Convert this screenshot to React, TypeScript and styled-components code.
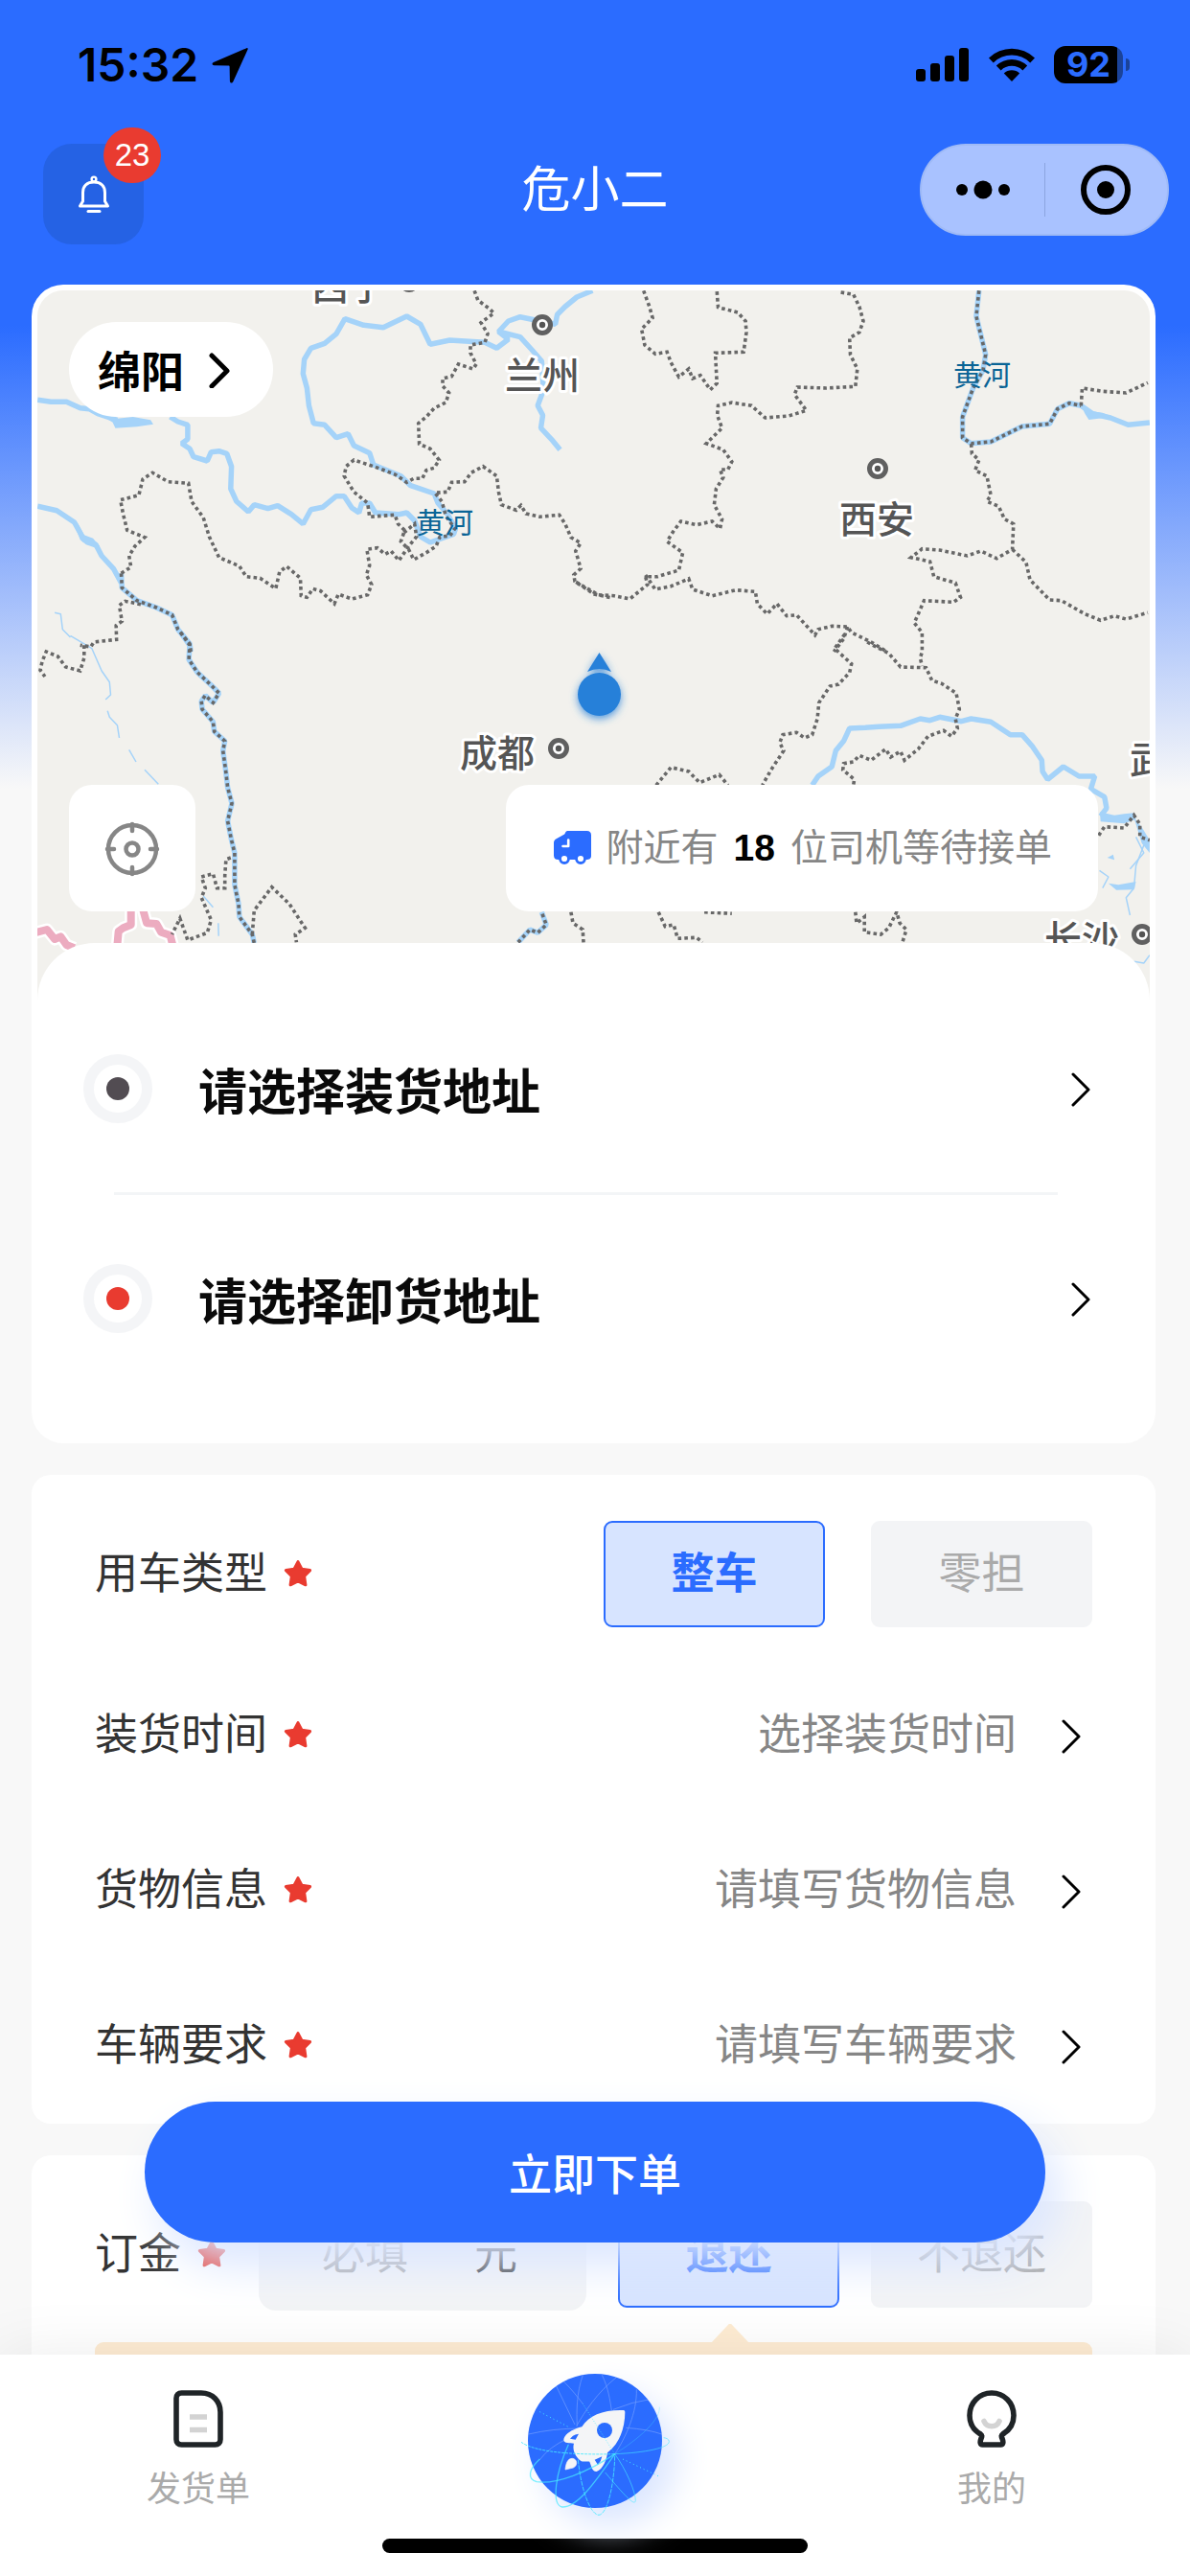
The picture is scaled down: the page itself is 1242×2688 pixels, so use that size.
import React from "react";
import styled, { createGlobalStyle, css } from "styled-components";

const BLUE = "#2b6cff";
const RED = "#e93b30";

const GlobalStyle = createGlobalStyle`
  *, *::before, *::after { box-sizing: border-box; }
  html, body { margin: 0; padding: 0; background: #f8f8f8; }
  body, button, input {
    font-family: "Liberation Sans", "Noto Sans CJK SC", sans-serif;
  }
  button { margin: 0; padding: 0; border: 0; background: none; color: inherit; cursor: pointer; }
  svg { display: block; flex: none; }
`;

/* ---------- page frame ---------- */

const Screen = styled.div`
  display: flex;
  flex-direction: column;
  height: 100vh;
  overflow: hidden;
  background: linear-gradient(${BLUE} 0, ${BLUE} 340px, #f8f8f8 823px);
`;

const StatusBar = styled.div`
  display: flex;
  align-items: center;
  justify-content: space-between;
  flex: none;
  height: 135px;
  padding: 0 63px 0 81px;
`;

const StatusGroup = styled.div<{ $gap: number }>`
  display: flex;
  align-items: center;
  gap: ${(p) => p.$gap}px;
`;

const Clock = styled.time`
  font: 600 48px/60px Inter, sans-serif;
`;

const Battery = styled.div`
  display: flex;
  align-items: center;
  gap: 3px;
`;

const BatteryBody = styled.div`
  width: 72px;
  height: 39px;
  border-radius: 12px;
  background: linear-gradient(90deg, #000 92%, #1b4399 92%);
  color: ${BLUE};
  font: 700 36px/39px Inter, sans-serif;
  text-align: center;
`;

const BatteryTip = styled.div`
  width: 4px;
  height: 13px;
  border-radius: 0 4px 4px 0;
  background: #1b4399;
`;

const NavBar = styled.header`
  display: grid;
  grid-template-columns: 1fr auto 1fr;
  flex: none;
  height: 162px;
  padding: 15px 22px 0;
`;

const BellButton = styled.button`
  position: relative;
  display: flex;
  align-items: center;
  justify-content: center;
  width: 105px;
  height: 105px;
  margin-left: 23px;
  border-radius: 30px;
  background: #2562e4;
`;

const Badge = styled.span`
  position: absolute;
  top: -17px;
  right: -18px;
  width: 60px;
  height: 58px;
  border-radius: 30px;
  background: ${RED};
  color: #fff;
  font-size: 33px;
  line-height: 58px;
  text-align: center;
`;

const Title = styled.h1`
  margin: 0;
  color: #fff;
  font-size: 51px;
  font-weight: 400;
  line-height: 98px;
`;

const Capsule = styled.div`
  display: flex;
  justify-self: end;
  align-items: center;
  width: 260px;
  height: 96px;
  border: 2px solid #9fbaf6;
  border-radius: 48px;
  background: #a9c2ff;
`;

const CapsuleButton = styled.button`
  display: flex;
  flex: 1;
  align-items: center;
  justify-content: center;
  height: 56px;
  & + & { border-left: 1px solid #8ba5e0; }
`;

const Body = styled.main`
  display: flex;
  flex: 1;
  flex-direction: column;
  gap: 33px;
  min-height: 0;
  padding: 0 36px 0 33px;
  overflow: hidden;
`;

/* ---------- map card ---------- */

const MapCard = styled.section`
  flex: none;
  padding: 6px;
  border-radius: 33px;
  background: #fff;
`;

const MapArea = styled.div`
  position: relative;
  height: 743px;
  overflow: hidden;
  border-radius: 27px 27px 0 0;
  background: #f2f1ed;
`;

const MapCanvas = styled.svg`
  position: absolute;
  inset: 0;
  width: 100%;
  height: 100%;
`;

const MapOverlay = styled.div`
  position: absolute;
  inset: 0;
  display: flex;
  flex-direction: column;
  align-items: flex-start;
  justify-content: space-between;
  padding: 33px 54px 95px 33px;
`;

const CityButton = styled.button`
  display: flex;
  align-items: center;
  gap: 25px;
  height: 99px;
  padding: 0 44px 0 30px;
  border-radius: 50px;
  background: #fff;
  font-size: 45px;
  font-weight: 700;
`;

const MapFooter = styled.div`
  display: flex;
  justify-content: space-between;
  align-self: stretch;
`;

const LocateButton = styled.button`
  display: flex;
  align-items: center;
  justify-content: center;
  width: 132px;
  height: 132px;
  border-radius: 24px;
  background: #fff;
`;

const NearbyDrivers = styled.p`
  display: flex;
  align-items: center;
  gap: 16px;
  height: 132px;
  margin: 0;
  padding: 0 48px 0 50px;
  border-radius: 24px;
  background: #fff;
  color: #868686;
  font-size: 39px;
  line-height: 60px;
`;

const DriverCount = styled.strong`
  color: #000;
`;

const AddressSheet = styled.div`
  position: relative;
  margin-top: -62px;
  padding: 44px 60px 37px 48px;
  border-radius: 60px 60px 27px 27px;
  background: #fff;
`;

const AddressRow = styled.button`
  display: flex;
  align-items: center;
  gap: 48px;
  width: 100%;
  height: 216px;
  font-size: 51px;
  font-weight: 700;
  text-align: left;
  color: #0a0a0a;
  & > span:nth-child(2) { flex: 1; }
`;

const Divider = styled.hr`
  height: 3px;
  margin: 0 36px 0 32px;
  border: 0;
  background: #f3f5f7;
`;

const Dot = styled.span<{ $color: string }>`
  display: flex;
  align-items: center;
  justify-content: center;
  width: 72px;
  height: 72px;
  border: 11px solid #f4f5f7;
  border-radius: 50%;
  background: #fff;
  &::after {
    content: "";
    width: 24px;
    height: 24px;
    border-radius: 50%;
    background: ${(p) => p.$color};
  }
`;

/* ---------- order form ---------- */

const FormCard = styled.section`
  flex: none;
  padding: 0 66px;
  border-radius: 20px;
  background: #fff;
`;

const rowBase = css`
  display: flex;
  align-items: center;
  width: 100%;
  font-size: 45px;
  line-height: 66px;
  color: #333;
`;

const FieldRow = styled.div<{ $top: number; $bottom: number }>`
  ${rowBase}
  margin: 0;
  padding: ${(p) => p.$top}px 0 ${(p) => p.$bottom}px;
`;

const PickerRow = styled.button`
  ${rowBase}
  height: 162px;
  padding-right: 10px;
  text-align: left;
`;

const FieldName = styled.span`
  display: flex;
  align-items: center;
  gap: 17px;
  margin-right: auto;
`;

const PickerValue = styled.span`
  margin-right: 45px;
  color: #868686;
`;

const Segments = styled.div<{ $gap: number }>`
  display: flex;
  gap: ${(p) => p.$gap}px;
`;

const SegmentInput = styled.input`
  position: absolute;
  inset: 0;
  margin: 0;
  opacity: 0;
`;

const Segment = styled.label`
  position: relative;
  display: flex;
  align-items: center;
  justify-content: center;
  width: 231px;
  height: 111px;
  border: 2px solid #f3f4f6;
  border-radius: 9px;
  background: #f3f4f6;
  color: #aaa;
  &:has(input:checked) {
    border-color: ${BLUE};
    background: #d7e4ff;
    color: ${BLUE};
    font-weight: 700;
  }
`;

const DepositBox = styled.label`
  display: flex;
  align-items: center;
  width: 342px;
  height: 117px;
  margin-right: 33px;
  padding-left: 66px;
  border-radius: 18px;
  background: #f3f4f6;
`;

const DepositInput = styled.input`
  width: 159px;
  padding: 0;
  border: 0;
  outline: 0;
  background: none;
  font-size: 45px;
  line-height: 66px;
  &::placeholder { color: #aaa; opacity: 1; }
`;

const Notice = styled.div`
  position: relative;
  height: 96px;
  border-radius: 9px;
  background: #feecd3;
  &::before {
    content: "";
    position: absolute;
    top: -19px;
    right: 358px;
    width: 40px;
    height: 20px;
    background: inherit;
    clip-path: polygon(47% 0, 53% 0, 100% 100%, 0 100%);
  }
`;

/* ---------- bottom ---------- */

const Dock = styled.footer`
  position: relative;
  flex: none;
  height: 231px;
  background: #fff;
  box-shadow: 0 0 60px rgba(0, 0, 0, 0.08);
`;

const SubmitButton = styled.button`
  position: absolute;
  right: 151px;
  bottom: calc(100% + 117px);
  left: 151px;
  height: 147px;
  border-radius: 74px;
  background: ${BLUE};
  box-shadow: 15px 24px 48px #dbe6ff;
  color: #fff;
  font-size: 45px;
  font-weight: 500;
`;

const Tabs = styled.nav`
  display: grid;
  grid-template-columns: repeat(3, 1fr);
  height: 192px;
`;

const Tab = styled.a`
  display: flex;
  flex-direction: column;
  align-items: center;
  gap: 17px;
  padding-top: 37px;
  color: #aaa;
  font-size: 36px;
  line-height: 54px;
  text-decoration: none;
`;

const RocketTab = styled.a`
  justify-self: center;
  align-self: start;
  width: 140px;
  height: 140px;
  margin-top: 20px;
  border-radius: 50%;
  background: ${BLUE};
  box-shadow: 15px 18px 36px #dbe6ff;
`;

const HomeIndicator = styled.div`
  width: 444px;
  height: 15px;
  margin: 0 auto;
  border-radius: 8px;
  background: #000;
`;

/* ---------- icons ---------- */

const Chevron = ({ weight = 4, color = "#000" }: { weight?: number; color?: string }) => (
  <svg width="24" height="38" viewBox="0 0 24 38" fill="none" stroke={color} strokeWidth={weight} strokeLinecap="round" strokeLinejoin="round" aria-hidden>
    <path d="M4 4 L20 20 L4 36" />
  </svg>
);

const Star = () => (
  <svg width="30" height="30" viewBox="0 0 30 30" fill={RED} stroke={RED} strokeWidth="3" strokeLinejoin="round" aria-hidden>
    <path d="M15 1.600 L19 9.200 L27.600 10.600 L21.600 16.800 L22.900 25.800 L15 22 L7.100 25.800 L8.400 16.800 L2.400 10.600 L11 9.200 Z" />
  </svg>
);

const LocationArrow = () => (
  <svg width="38" height="38" viewBox="0 0 38 38" aria-hidden>
    <path d="M36.4 1.2 C37.6 .8 38 1.6 37.5 2.8 L22.3 36.2 C21.3 38.3 19 38 18.9 35.6 L18.6 20.6 C18.6 19.8 18.3 19.4 17.4 19.4 L2.6 19.2 C.2 19.1 -.2 17 1.9 16 Z" />
  </svg>
);

const Signal = () => (
  <svg width="56" height="36" viewBox="0 0 56 36" aria-hidden>
    <rect x="0" y="22" width="10" height="13" rx="3" />
    <rect x="15" y="16" width="10" height="19" rx="3" />
    <rect x="30" y="8" width="10" height="27" rx="3" />
    <rect x="45" y="0" width="10" height="35" rx="3" />
  </svg>
);

const Wifi = () => (
  <svg width="50" height="36" viewBox="0 0 50 36" aria-hidden>
    <path d="M1 10.5 A34.5 34.5 0 0 1 49 10.5 L44.2 15.4 A27.5 27.5 0 0 0 5.8 15.4 Z" />
    <path d="M8.8 18.6 A23.5 23.5 0 0 1 41.2 18.6 L36.4 23.4 A16.5 16.5 0 0 0 13.6 23.4 Z" />
    <path d="M16.8 26.6 A12 12 0 0 1 33.2 26.6 L25 35 Z" />
  </svg>
);

const Bell = () => (
  <svg width="34" height="40" viewBox="0 0 34 40" fill="none" stroke="#fff" strokeWidth="3" strokeLinecap="round" strokeLinejoin="round" aria-hidden>
    <circle cx="17" cy="4" r="2.4" strokeWidth="2.4" />
    <path d="M5.5 27 V18 C5.500 11 10 7 17 7 S28.500 11 28.500 18 V27 L31.500 32 H2.500 Z" />
    <path d="M11 37.500 H23" />
  </svg>
);

const Crosshair = () => (
  <svg width="60" height="60" viewBox="0 0 60 60" fill="none" stroke="#868686" strokeWidth="4.500" strokeLinecap="round" aria-hidden>
    <circle cx="30" cy="31" r="25" />
    <circle cx="30" cy="31" r="6.500" />
    <path d="M30 5 V12 M30 50 V57 M4 31 H11 M49 31 H56" />
  </svg>
);

const Truck = () => (
  <svg width="39" height="36" viewBox="0 0 39 36" aria-hidden>
    <path fill={BLUE} d="M15 0 H34.500 C37.500 0 39 1.500 39 4.500 V26 C39 29 37 30 34 30 H4.500 C1.500 30 0 28.500 0 25.500 V12.500 C0 10.500 .7 9.500 2.200 8.500 L8.500 5 C10.500 4 11.500 3.500 12 2 C12.500 .5 13.500 0 15 0 Z" />
    <path fill="none" stroke="#fff" strokeWidth="2.600" strokeLinecap="round" strokeLinejoin="round" d="M15.200 9.500 V16 H9.500" />
    <circle cx="11" cy="29" r="4.500" fill="#fff" stroke={BLUE} strokeWidth="2.800" />
    <circle cx="28" cy="29" r="4.500" fill="#fff" stroke={BLUE} strokeWidth="2.800" />
  </svg>
);

const OrdersIcon = () => (
  <svg width="52" height="60" viewBox="0 0 52 60" fill="none" aria-hidden>
    <path d="M8.500 3 H29 C41 3 49 11.500 49 23 V51.500 C49 55 47 57 43.500 57 H8.500 C5 57 3 55 3 51.500 V8.500 C3 5 5 3 8.500 3 Z" stroke="#1f2427" strokeWidth="5.600" />
    <path d="M17 28 H35 M17 41.500 H35" stroke="#d3d3d3" strokeWidth="5.600" />
  </svg>
);

const MineIcon = () => (
  <svg width="52" height="60" viewBox="0 0 52 60" fill="none" strokeLinecap="round" strokeLinejoin="round" aria-hidden>
    <path d="M14.500 46 C7.500 42 3 35 3 26.500 C3 13 13 3 26 3 S49 13 49 26.500 C49 35 44.500 42 37.500 46 C36 47 36.300 49 37 50.500 C38.500 54.500 38 57 35.500 57 H16.500 C14 57 13.500 54.500 15 50.500 C15.700 49 16 47 14.500 46 Z" stroke="#1f2427" strokeWidth="5.600" />
    <path d="M18 32.500 C21 39.500 31 39.500 34 32.500" stroke="#d3d3d3" strokeWidth="5.600" />
  </svg>
);

const Rocket = () => (
  <svg width="140" height="140" viewBox="213 171 420 420" overflow="visible" fill="none" aria-hidden>
    <g stroke="#fff" strokeWidth="2.500" opacity=".28">
      <path d="M385 175 C365 230 365 290 367 335 M445 175 C465 215 470 255 475 285 M490 182 C430 230 390 290 365 335" />
      <path d="M302 210 L360 330 M325 195 C350 220 370 245 385 265 M553 220 C555 290 520 370 485 422" />
      <path d="M480 283 Q540 258 600 250 M215 360 Q290 342 380 342 M520 340 Q590 345 632 360" />
      <path d="M335 375 Q280 400 250 440" />
    </g>
    <path d="M512 285 C450 283 405 300 382 337 C350 345 325 362 325 378 C325 389 345 388 357 389 C352 405 358 428 378 443 C385 448 400 444 406 446 C412 460 414 478 428 477 C448 470 460 440 462 418 C500 390 517 340 517 290 Q517 285 512 285 Z" fill="#f4f5f7" />
    <path d="M330 471 C332 450 338 436 352 436 C368 438 370 458 355 465 Z" fill="#f4f5f7" stroke="#f4f5f7" strokeWidth="2" />
    <g fill={BLUE}>
      <circle cx="453" cy="348" r="24" />
      <path d="M345 374 Q355 360 372 359 L362 377 Z M422 440 L445 430 Q442 446 432 456 Z" />
    </g>
    <g stroke="#46e9ff" strokeWidth="3">
      <path d="M192 385 C240 420 380 425 485 422" strokeDasharray="9 3" opacity=".85" />
      <path d="M485 422 C580 418 655 403 655 383 C655 375 645 372 638 371" opacity=".6" />
      <path d="M250 438 C215 470 210 500 240 509 C300 518 400 480 485 422" strokeWidth="4" opacity=".7" />
      <path d="M485 422 C560 375 628 315 625 275" opacity=".3" />
      <path d="M340 392 C300 480 285 580 320 588 C370 590 430 500 485 422" strokeWidth="4" opacity=".7" />
      <path d="M370 440 C380 540 410 612 435 613 C465 610 485 500 485 422" strokeDasharray="14 3" opacity=".85" />
      <path d="M485 422 C520 470 550 540 550 568 C548 583 530 570 455 480" opacity=".6" />
      <path d="M485 422 L385 265" strokeDasharray="3 5" opacity=".7" />
      <path d="M250 290 L345 340 M510 438 L625 493" strokeDasharray="3 9" />
    </g>
  </svg>
);

/* ---------- map drawing ---------- */

type Tile = { x: number; y: number; sx: number; sy: number };

const NW: Tile = { x: 0, y: 280, sx: 2.45, sy: 3 };
const NE: Tile = { x: 600, y: 280, sx: 2.442, sy: 3 };
const SW: Tile = { x: 0, y: 660, sx: 2.45, sy: 3 };
const SE: Tile = { x: 600, y: 660, sx: 2.442, sy: 3 };

const project = ([tile, pts]: [Tile, string]) =>
  pts
    .split(" ")
    .map((p) => p.split(",").map(Number))
    .map(([x, y]) => `${(tile.x + x / tile.sx).toFixed(1)},${(tile.y + y / tile.sy).toFixed(1)}`)
    .join(" ");

const RIVERS: [Tile, string][] = [
  [NW, "96,412 130,418 170,418 205,437 228,440 250,455 300,475"],
  [NW, "435,465 455,480 480,490 480,535 465,548 485,565 495,590 530,603 540,575 560,572 580,580 592,620 590,690 605,730 635,762 650,740 685,752 710,743 745,770 775,800 795,755 825,748 860,713 880,713 900,750 918,765 925,735 945,735 960,765 1020,770 1040,765 1060,790 1075,840 1100,858 1160,832 1165,815 1145,770 1120,735 1110,705 1050,680 1025,650 955,615 945,578 905,555 890,518 860,530 830,490 802,485 790,430 785,375 775,330 778,285 795,250 830,235 860,205 882,158 930,178 980,185 1040,150 1075,175 1100,238 1150,225 1240,232 1270,250 1300,222 1275,198 1300,165 1330,152 1420,175 1425,145 1445,120 1475,90 1515,70"],
  [NW, "1275,198 1330,215 1360,255 1385,290 1390,380 1375,430 1388,460 1383,500 1410,535 1432,568"],
  [NW, "96,745 145,758 190,795 215,850 245,865 260,900 290,940 310,985"],
  [NE, "1290,430 1320,455 1365,468 1410,490 1465,483"],
  [SE, "605,478 620,450 655,420 665,370 685,340 700,300 740,298 775,295 830,292 880,270 905,275 930,265 985,278 1010,270 1060,280 1110,320 1140,320 1165,355 1190,400 1192,435 1205,460 1245,420 1285,450 1325,450 1315,490 1350,515 1355,550 1340,575"],
];

const LAKES: [Tile, string][] = [
  [NW, "262,462 300,470 340,465 385,475 392,488 350,496 295,500 288,482"],
  [NW, "185,785 200,800 215,835 238,845 255,870 245,875 220,865 205,850"],
  [NE, "1290,430 1318,448 1345,452 1370,465 1335,470 1310,474 1300,455"],
  [SE, "1338,562 1375,572 1400,568 1425,565 1430,585 1400,598 1340,592"],
  [SE, "1360,785 1385,790 1430,780 1425,805 1380,806"],
  [SE, "1357,705 1372,695 1375,712"],
  [SE, "1425,580 1445,610 1465,650 1465,690 1445,660"],
];

const THIN_RIVERS: [Tile, string][] = [
  [NW, "140,1078 155,1082 160,1130 180,1155"],
  [SW, "180,10 235,50 260,120 280,155 283,195 270,210"],
  [SW, "275,245 280,265 300,290 305,330"],
  [SW, "330,367 348,405"],
  [SW, "370,430 405,475"],
  [SW, "520,825 545,860"],
  [SW, "558,910 559,950"],
  [SE, "1430,640 1450,690 1415,740"],
  [SE, "1455,650 1430,730 1425,800 1405,830 1415,885"],
  [SE, "1337,745 1360,765 1345,800"],
  [SE, "1425,1030 1450,1035 1465,1010"],
];

const FOLLOWED: [Tile, string][] = [
  [NW, "310,955 312,1000 350,1040 400,1062 440,1085 455,1130 485,1175 488,1200"],
  [SW, "462,0 485,40 483,85 505,125 540,165 560,190 545,220 525,197 515,215 517,240 545,280 548,310 575,340 570,370 577,430 582,485 593,535 582,590 592,650 600,690 600,790 610,850 612,890 645,945 650,972"],
  [NE, "1030,70 1023,150 1047,270 1040,320 1015,375 988,465 988,530 1010,548 1060,543 1140,495 1210,487 1230,440 1260,422 1290,430"],
  [SW, "1325,970 1355,930 1375,940 1397,915 1385,875"],
];

const BORDERS: [Tile, string][] = [
  ...FOLLOWED,
  [NW, "1213,70 1222,100 1250,125 1263,140 1230,170 1247,205 1240,232 1203,240 1203,265 1218,300 1210,315 1172,300 1155,338 1132,345 1132,368 1148,390 1140,420 1110,438 1090,465 1070,485 1072,550 1100,565 1123,600 1110,625 1090,632 1080,658 1058,658 1040,670 1010,645 960,622 905,600 885,620 880,650 905,700 940,735 945,778 975,775 1010,772 1018,800 1035,820 1025,855 1045,880 1058,912 1090,890 1115,870 1125,840 1150,838 1163,815 1140,775 1130,730 1112,703 1145,700 1155,670 1188,668 1205,640 1235,620 1270,650 1275,700 1282,740 1320,757 1332,742 1345,768 1380,778 1430,772 1445,800 1460,842 1485,860 1472,885 1485,940 1467,960 1470,980 1520,1020 1565,1032"],
  [NW, "310,955 335,935 330,900 345,870 370,842 325,820 315,770 308,725 355,710 365,660 390,640 430,668 482,673 490,730 520,780 535,840 560,905 612,932 630,965 665,970 705,1003 715,950 733,933 768,970 770,1025 785,1030 800,1003 820,1010 855,1050 865,1020 900,1035 940,1022 950,990 937,960 945,930 938,880 965,875 985,895 1000,885 1020,915 1045,870 1065,840 1060,800 1030,830"],
  [NW, "360,1052 320,1042 305,1055 312,1105 297,1118 298,1162 240,1170 232,1185 205,1180"],
  [SW, "215,40 215,80 205,120 168,108 148,75 118,60 108,90 103,118 115,138"],
  [SW, "590,705 578,710 575,760 575,800 555,800 545,755 515,765 525,800 515,830 540,900 530,940 480,963 460,895 440,945"],
  [SW, "645,945 650,870 695,797 740,850 780,925 755,945 758,970"],
  [SW, "1460,875 1465,910 1490,930 1492,970"],
  [NE, "175,70 190,120 198,155 170,190 178,240 205,268 235,262 245,295 265,340 290,315 300,345 320,335 345,380 362,360 358,265 430,262 437,200 435,165 415,138 365,122 362,70"],
  [NE, "678,75 710,82 725,120 735,165 725,200 700,218 702,270 720,315 715,370 640,375 567,372 560,395 590,445 545,462 485,468 450,430 400,420 365,430 363,460 375,500 335,548 378,568 400,605 390,630 370,630 378,655 360,690 355,740 375,785 370,815 350,792 310,803 270,792 250,825 235,855 275,890 265,945 210,965 180,965 185,990 140,1035 100,1025 60,1022 0,980"],
  [NE, "180,960 205,1005 245,995 290,972 300,1005 350,1025 410,1007 460,1012 465,1050 490,1082 515,1050 540,1088 565,1085 612,1148 620,1130 655,1120 695,1122 705,1140 755,1170 795,1200"],
  [NE, "695,1122 685,1160 660,1200"],
  [SE, "745,30 760,40 800,65 830,108 895,110 910,150 935,160 972,190 980,240 970,270 975,300 960,325 940,307 900,325 875,365 840,400 830,372 805,390 792,365 755,400 725,385 710,405 685,410 683,430 712,460 710,478"],
  [SE, "688,5 662,50 705,98 700,125 672,162 650,168 622,220 618,270 605,320 585,330 565,313 530,320 522,345 532,370 500,430 478,478"],
  [NE, "1290,430 1293,375 1345,385 1405,390 1460,358"],
  [NE, "1010,550 1012,580 1030,600 1020,632 1050,650 1060,710 1050,730 1080,745 1095,785 1118,800 1115,880 1075,908 1035,885 1000,900 930,882 885,878 857,905 905,918 915,965 970,985 983,1030 965,1045 890,1040 865,1110 885,1140 885,1200 880,1220 885,1245"],
  [NE, "1115,880 1150,920 1160,975 1210,1038 1240,1040 1300,1082 1340,1102 1375,1088 1405,1098 1460,1078"],
  [SE, "207,478 245,422 290,435 318,470 368,445 390,478"],
  [SE, "1335,635 1350,608 1400,612 1425,572 1440,600 1440,640 1465,650"],
  [SE, "213,875 230,920 252,915 262,958 310,955 325,970"],
  [SE, "330,875 400,880"],
  [SE, "715,875 718,910 738,890 738,938 780,945 800,925 820,875 828,910 845,930 835,970"],
];

const FRONTIER: [Tile, string][] = [
  [SW, "90,940 120,930 140,960 155,952 170,978 190,988"],
  [SW, "300,980 303,935 315,925 335,915 335,865"],
  [SW, "365,865 375,910 400,912 412,938 435,948 442,980"],
];

const CITIES = [
  { name: "西宁", x: 364, y: 298, px: 427, py: 294 },
  { name: "兰州", x: 566, y: 391, px: 566, py: 339 },
  { name: "西安", x: 915, y: 541, px: 916, py: 489 },
  { name: "成都", x: 519, y: 785, px: 583, py: 781 },
  { name: "长沙", x: 1129, y: 979, px: 1192, py: 975 },
  { name: "武汉", x: 1218, y: 792, px: 1280, py: 792 },
];

const RIVER_NAMES = [
  { x: 464, y: 545 },
  { x: 1025, y: 391 },
];

const Lines = ({ of }: { of: [Tile, string][] }) => (
  <>
    {of.map((line, i) => (
      <polyline key={i} points={project(line)} />
    ))}
  </>
);

const CityLabel = styled.text`
  fill: #555;
  stroke: #fff;
  stroke-width: 6px;
  stroke-linejoin: round;
  paint-order: stroke;
  font-family: "Noto Sans CJK SC", sans-serif;
  font-size: 39px;
  font-weight: 500;
  text-anchor: middle;
`;

const RiverLabel = styled.text`
  fill: #0a6496;
  font-family: "Noto Sans CJK SC", sans-serif;
  font-size: 30px;
  text-anchor: middle;
`;

const CityMap = () => (
  <MapCanvas viewBox="39 303 1161 743" preserveAspectRatio="xMidYMin slice" role="img" aria-label="地图">
    <defs>
      <filter id="glow" x="-50%" y="-50%" width="200%" height="200%">
        <feDropShadow dx="0" dy="3" stdDeviation="4" floodColor="#2680d9" floodOpacity=".8" />
      </filter>
    </defs>
    <g fill="none" stroke="#a5d3f9" strokeLinejoin="bevel">
      <g strokeWidth="5.500"><Lines of={RIVERS} /></g>
      <g strokeWidth="5.500"><Lines of={FOLLOWED} /></g>
      <g strokeWidth="1.500"><Lines of={THIN_RIVERS} /></g>
    </g>
    <g fill="#a5d3f9">
      {LAKES.map((lake, i) => (
        <polygon key={i} points={project(lake)} />
      ))}
    </g>
    <g fill="none" stroke="#fff" strokeWidth="13" strokeLinejoin="round"><Lines of={FRONTIER} /></g>
    <g fill="none" stroke="#ecacc0" strokeWidth="8" strokeLinejoin="round"><Lines of={FRONTIER} /></g>
    <g fill="none" stroke="#686868" strokeWidth="3.600" strokeDasharray="3.600 3.200"><Lines of={BORDERS} /></g>
    {RIVER_NAMES.map((r) => (
      <RiverLabel key={r.x} x={r.x} y={r.y + 11}>黄河</RiverLabel>
    ))}
    {CITIES.map((c) => (
      <g key={c.name}>
        <circle cx={c.px} cy={c.py} r="8.500" fill="#fff" stroke="#606060" strokeWidth="5" />
        <circle cx={c.px} cy={c.py} r="3.200" fill="#555" />
        <CityLabel x={c.x} y={c.y + 15}>{c.name}</CityLabel>
      </g>
    ))}
    <g fill="#2680d9" filter="url(#glow)">
      <circle cx="625.500" cy="724.500" r="22.500" />
      <path d="M625.500 681 L638 701 Q625.500 695 613 701 Z" />
    </g>
  </MapCanvas>
);

/* ---------- page ---------- */

const PICKERS = [
  { name: "装货时间", value: "选择装货时间" },
  { name: "货物信息", value: "请填写货物信息" },
  { name: "车辆要求", value: "请填写车辆要求" },
];

const Choice = ({ group, options, gap }: { group: string; options: string[]; gap: number }) => (
  <Segments $gap={gap} role="radiogroup" aria-label={group}>
    {options.map((label, i) => (
      <Segment key={label}>
        <SegmentInput type="radio" name={group} defaultChecked={i === 0} />
        {label}
      </Segment>
    ))}
  </Segments>
);

export default function App() {
  return (
    <Screen>
      <GlobalStyle />
      <StatusBar>
        <StatusGroup $gap={14}>
          <Clock>15:32</Clock>
          <LocationArrow />
        </StatusGroup>
        <StatusGroup $gap={19}>
          <Signal />
          <Wifi />
          <Battery>
            <BatteryBody>92</BatteryBody>
            <BatteryTip />
          </Battery>
        </StatusGroup>
      </StatusBar>

      <NavBar>
        <BellButton aria-label="消息">
          <Bell />
          <Badge>23</Badge>
        </BellButton>
        <Title>危小二</Title>
        <Capsule>
          <CapsuleButton aria-label="更多">
            <svg width="60" height="24" viewBox="0 0 60 24">
              <circle cx="8" cy="12" r="6" />
              <circle cx="30" cy="12" r="9.500" />
              <circle cx="52" cy="12" r="6" />
            </svg>
          </CapsuleButton>
          <CapsuleButton aria-label="关闭">
            <svg width="54" height="54" viewBox="0 0 54 54">
              <circle cx="27" cy="27" r="23" fill="none" stroke="#000" strokeWidth="6" />
              <circle cx="27" cy="27" r="9" />
            </svg>
          </CapsuleButton>
        </Capsule>
      </NavBar>

      <Body>
        <MapCard>
          <MapArea>
            <CityMap />
            <MapOverlay>
              <CityButton>
                绵阳
                <Chevron weight={5} />
              </CityButton>
              <MapFooter>
                <LocateButton aria-label="定位">
                  <Crosshair />
                </LocateButton>
                <NearbyDrivers>
                  <Truck />
                  <span>附近有</span>
                  <DriverCount>18</DriverCount>
                  <span>位司机等待接单</span>
                </NearbyDrivers>
              </MapFooter>
            </MapOverlay>
          </MapArea>
          <AddressSheet>
            <AddressRow>
              <Dot $color="#524c52" />
              <span>请选择装货地址</span>
              <Chevron weight={3} />
            </AddressRow>
            <Divider />
            <AddressRow>
              <Dot $color={RED} />
              <span>请选择卸货地址</span>
              <Chevron weight={3} />
            </AddressRow>
          </AddressSheet>
        </MapCard>

        <FormCard>
          <FieldRow $top={48} $bottom={32}>
            <FieldName>用车类型<Star /></FieldName>
            <Choice group="用车类型" options={["整车", "零担"]} gap={48} />
          </FieldRow>
          {PICKERS.map((p) => (
            <PickerRow key={p.name}>
              <FieldName>{p.name}<Star /></FieldName>
              <PickerValue>{p.value}</PickerValue>
              <Chevron weight={3} />
            </PickerRow>
          ))}
        </FormCard>

        <FormCard>
          <FieldRow $top={45} $bottom={33}>
            <FieldName>订金<Star /></FieldName>
            <DepositBox>
              <DepositInput placeholder="必填" aria-label="订金" inputMode="decimal" />
              元
            </DepositBox>
            <Choice group="订金退还" options={["退还", "不退还"]} gap={33} />
          </FieldRow>
          <Notice />
        </FormCard>
      </Body>

      <Dock>
        <SubmitButton>立即下单</SubmitButton>
        <Tabs>
          <Tab href="#orders">
            <OrdersIcon />
            发货单
          </Tab>
          <RocketTab href="#ship" aria-label="发货">
            <Rocket />
          </RocketTab>
          <Tab href="#mine">
            <MineIcon />
            我的
          </Tab>
        </Tabs>
        <HomeIndicator />
      </Dock>
    </Screen>
  );
}
